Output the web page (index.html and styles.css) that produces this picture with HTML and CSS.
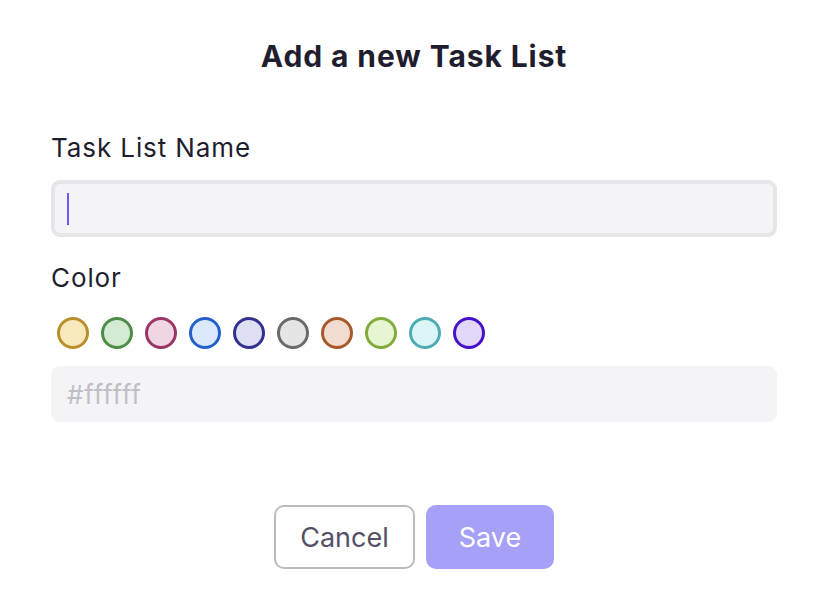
FILE: index.html
```html
<!DOCTYPE html>
<html>
<head>
<meta charset="utf-8">
<link rel="stylesheet" href="styles.css">
</head>
<body>
<div class="modal">
  <h1 class="title">Add a new Task List</h1>
  <label class="label label-name">Task List Name</label>
  <div class="input input-name"><span class="caret"></span></div>
  <label class="label label-color">Color</label>
  <div class="swatches">
    <span class="swatch" style="background:#f8e9bc;border-color:#b88f2b"></span>
    <span class="swatch" style="background:#d3ead3;border-color:#4e8c4a"></span>
    <span class="swatch" style="background:#f0d6e3;border-color:#9a3566"></span>
    <span class="swatch" style="background:#dce9fd;border-color:#2460cc"></span>
    <span class="swatch" style="background:#dfdff4;border-color:#33308f"></span>
    <span class="swatch" style="background:#e5e5e5;border-color:#6a6a6a"></span>
    <span class="swatch" style="background:#f2dccf;border-color:#a65a2c"></span>
    <span class="swatch" style="background:#e6f6d3;border-color:#80ac3c"></span>
    <span class="swatch" style="background:#dcf6f7;border-color:#4dacb4"></span>
    <span class="swatch" style="background:#e3d8fa;border-color:#4512cc"></span>
  </div>
  <div class="input input-hex"><span class="placeholder">#ffffff</span></div>
  <div class="actions">
    <button class="btn btn-cancel">Cancel</button>
    <button class="btn btn-save">Save</button>
  </div>
</div>
</body>
</html>
```
FILE: styles.css
```css
html, body {
  margin: 0;
  padding: 0;
  background: #ffffff;
}
body {
  font-family: Inter, "Noto Sans", sans-serif;
  color: #1f1e2e;
}
.modal {
  display: flex;
  flex-direction: column;
  padding: 0 53px 0 51px;
}
.title {
  margin: 39px 0 0 0;
  font-size: 30px;
  font-weight: 700;
  letter-spacing: 0.9px;
  text-align: center;
  line-height: 35px;
  color: #1f1e2e;
}
.label {
  display: block;
  font-size: 26px;
  font-weight: 400;
  letter-spacing: 0.9px;
  line-height: 31px;
  color: #1f1e2e;
}
.label-name {
  margin-top: 58px;
}
.label-color {
  margin-top: 25px;
}
.input {
  box-sizing: border-box;
  height: 57px;
  border-radius: 9px;
  background: #f4f4f7;
  display: flex;
  align-items: center;
}
.input-name {
  margin-top: 17px;
  border: 4px solid #e5e5ea;
  padding-left: 12px;
}
.caret {
  display: block;
  width: 2px;
  height: 32px;
  background: #6b5cf6;
}
.swatches {
  display: flex;
  margin-top: 24px;
}
.swatch {
  box-sizing: border-box;
  width: 32px;
  height: 32px;
  border-radius: 50%;
  border: 3px solid;
  margin: 0 6px;
}
.input-hex {
  margin-top: 17px;
  height: 56px;
  padding-left: 16px;
}
.placeholder {
  font-size: 26px;
  letter-spacing: 0.8px;
  color: #c0bfc7;
}
.actions {
  display: flex;
  justify-content: center;
  gap: 11px;
  margin-top: 83px;
}
.btn {
  box-sizing: border-box;
  height: 64px;
  border-radius: 10px;
  font-family: Inter, "Noto Sans", sans-serif;
  font-size: 27px;
  cursor: pointer;
}
.btn-cancel {
  width: 141px;
  background: #ffffff;
  border: 2px solid #bcbbc2;
  color: #545066;
}
.btn-save {
  width: 128px;
  background: #a6a0f6;
  border: none;
  color: #ffffff;
}
```
